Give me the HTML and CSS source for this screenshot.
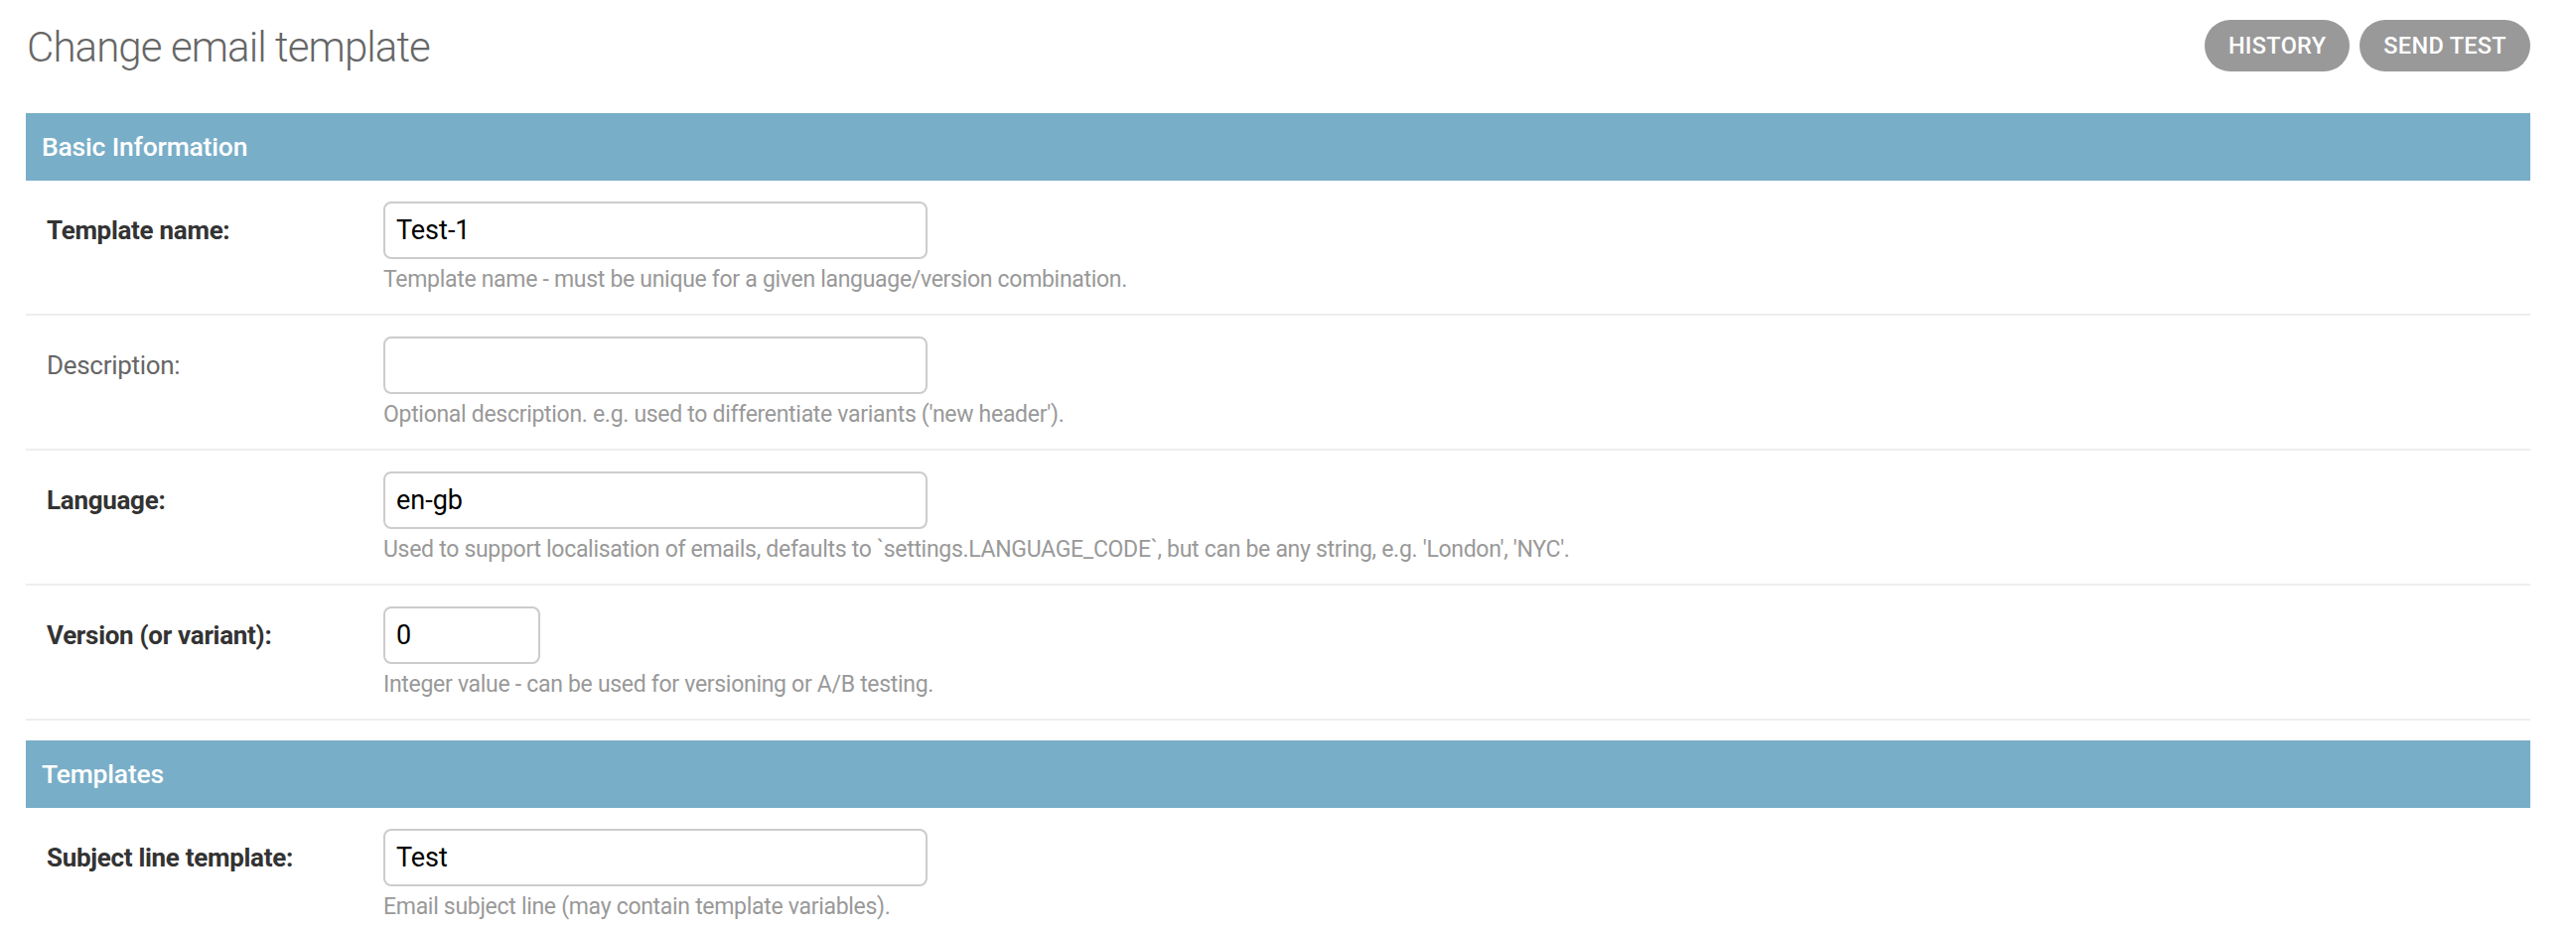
FILE: index.html
```html
<!DOCTYPE html>
<html lang="en">
<head>
<meta charset="utf-8">
<title>Change email template</title>
<link rel="stylesheet" href="styles.css">
</head>
<body>
<div class="page">
  <div class="header">
    <h1 class="title">Change email template</h1>
    <ul class="tools">
      <li><a class="tool-btn" href="#">History</a></li>
      <li><a class="tool-btn" href="#">Send test</a></li>
    </ul>
  </div>

  <fieldset class="module">
    <h2 class="module-title">Basic Information</h2>
    <div class="form-row">
      <label class="label required">Template name:</label>
      <div class="field">
        <input class="text-input wide" type="text" value="Test-1">
        <div class="help">Template name - must be unique for a given language/version combination.</div>
      </div>
    </div>
    <div class="form-row">
      <label class="label">Description:</label>
      <div class="field">
        <input class="text-input wide" type="text" value="">
        <div class="help">Optional description. e.g. used to differentiate variants ('new header').</div>
      </div>
    </div>
    <div class="form-row">
      <label class="label required">Language:</label>
      <div class="field">
        <input class="text-input wide" type="text" value="en-gb">
        <div class="help">Used to support localisation of emails, defaults to `settings.LANGUAGE_CODE`, but can be any string, e.g. 'London', 'NYC'.</div>
      </div>
    </div>
    <div class="form-row">
      <label class="label required">Version (or variant):</label>
      <div class="field">
        <input class="text-input narrow" type="text" value="0">
        <div class="help">Integer value - can be used for versioning or A/B testing.</div>
      </div>
    </div>
  </fieldset>

  <fieldset class="module">
    <h2 class="module-title">Templates</h2>
    <div class="form-row">
      <label class="label required">Subject line template:</label>
      <div class="field">
        <input class="text-input wide" type="text" value="Test">
        <div class="help">Email subject line (may contain template variables).</div>
      </div>
    </div>
  </fieldset>
</div>
</body>
</html>
```

FILE: styles.css
```css
html, body {
  margin: 0;
  padding: 0;
  overflow: hidden;
  background: #fff;
}

body {
  font-family: Roboto, "Liberation Sans", Arial, sans-serif;
  color: #333;
}

.page {
  padding: 0 46px 0 26px;
}

.header {
  box-sizing: border-box;
  height: 114px;
  padding-top: 20px;
  display: flex;
  justify-content: space-between;
  align-items: flex-start;
}

.title {
  margin: 2px 0 0 1px;
  font-size: 42px;
  font-weight: 300;
  line-height: 52px;
  letter-spacing: -0.9px;
  color: #666;
}

.tools {
  list-style: none;
  margin: 0;
  padding: 0;
  display: flex;
  gap: 10px;
}

.tool-btn {
  display: block;
  height: 52px;
  line-height: 52px;
  padding: 0 24px;
  border-radius: 26px;
  background: #999;
  color: #fff;
  text-decoration: none;
  text-transform: uppercase;
  font-size: 23.5px;
  font-weight: 500;
  letter-spacing: 0.3px;
}

.module {
  margin: 0 0 20px 0;
  padding: 0;
  border: 0;
  min-width: 0;
}

.module-title {
  margin: 0;
  height: 68px;
  line-height: 68px;
  padding: 0 16px;
  background: #79aec8;
  color: #fff;
  font-size: 26.5px;
  font-weight: 500;
  letter-spacing: -0.2px;
}

.form-row {
  display: flex;
  align-items: flex-start;
  padding: 21px;
  border-bottom: 2px solid #eee;
}

.label {
  flex: 0 0 339px;
  font-size: 26px;
  line-height: 58px;
  letter-spacing: -0.3px;
  color: #666;
  font-weight: 400;
}

.label.required {
  color: #333;
  font-weight: 700;
}

.field {
  display: flex;
  flex-direction: column;
  align-items: flex-start;
}

.text-input {
  box-sizing: border-box;
  height: 58px;
  margin: 0;
  padding: 0 11px;
  border: 2px solid #ccc;
  border-radius: 8px;
  font-family: Roboto, "Liberation Sans", Arial, sans-serif;
  font-size: 27px;
  color: #000;
  background: #fff;
  outline: none;
}

.text-input.wide {
  width: 548px;
}

.text-input.narrow {
  width: 158px;
}

.help {
  margin-top: 8px;
  font-size: 23px;
  line-height: 26px;
  letter-spacing: -0.3px;
  color: #999;
  white-space: nowrap;
}
```
